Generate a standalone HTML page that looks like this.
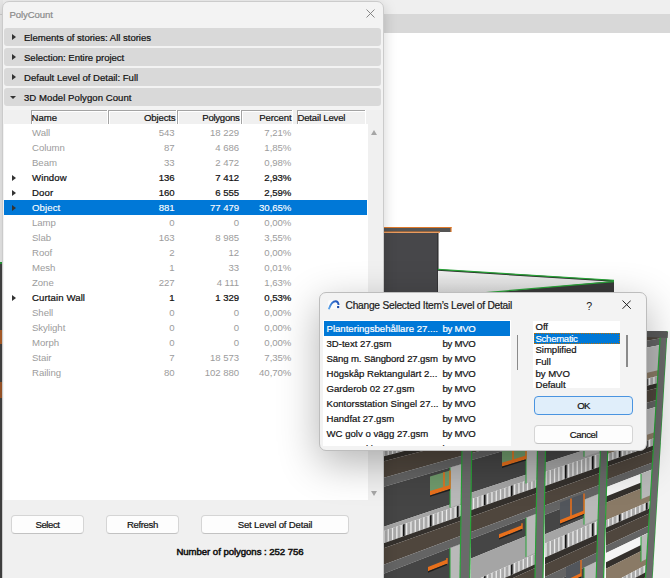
<!DOCTYPE html><html><head><meta charset="utf-8"><style>html,body{margin:0;padding:0}
body{width:670px;height:578px;overflow:hidden;position:relative;background:#fff;font-family:"Liberation Sans",sans-serif;}
.t{position:absolute;white-space:nowrap;line-height:12px;}
.abs{position:absolute;}
.bgtop{position:absolute;left:0;top:0;width:670px;height:14px;background:#efefef;}
.bgband{position:absolute;left:0;top:14px;width:670px;height:19px;background:#d8d8d8;}
.pcframe{position:absolute;left:2px;top:1px;width:380px;height:620px;background:#f3f3f3;border:1px solid #cbcbcb;border-radius:7px;box-shadow:0 4px 14px rgba(0,0,0,0.18);}
.sec{position:absolute;left:4px;width:377px;height:18px;background:#d9d9d9;border-radius:3px;}
.trir{position:absolute;width:0;height:0;border-left:4px solid #333;border-top:3.5px solid transparent;border-bottom:3.5px solid transparent;}
.trid{position:absolute;width:0;height:0;border-top:3.5px solid #333;border-left:3px solid transparent;border-right:3px solid transparent;}
.thead{position:absolute;left:4px;top:110px;width:364px;height:14px;background:#f0f0f0;}
.tbody{position:absolute;left:4px;top:124px;width:364px;height:376px;background:#fff;}
.hc{position:absolute;top:110px;height:13px;border-top:1px solid #a3a3a3;border-left:1px solid #a3a3a3;box-shadow:inset 1px 1px 0 #fff, 1px 0 0 #fff;box-sizing:border-box;height:14px;}
.selrow{position:absolute;left:4px;width:363px;height:15px;background:#0078d7;}
.scrollbg{position:absolute;left:368px;top:110px;width:15px;height:390px;background:#f0f0f0;}
.sup{position:absolute;left:371px;top:130px;width:0;height:0;border-bottom:5px solid #a6a6a6;border-left:3.5px solid transparent;border-right:3.5px solid transparent;}
.sdn{position:absolute;left:371px;top:491px;width:0;height:0;border-top:5px solid #a6a6a6;border-left:3.5px solid transparent;border-right:3.5px solid transparent;}
.bottom{position:absolute;left:3px;top:500px;width:380px;height:78px;background:#f0f0f0;}
.btn{position:absolute;box-sizing:border-box;background:#fdfdfd;border:1px solid #d5d5d5;border-bottom-color:#c2c2c2;border-radius:4px;}
.cdframe{position:absolute;left:319px;top:292px;width:326px;height:157px;background:#f3f3f3;border:1px solid #bdbdbd;border-radius:7px;box-shadow:0 12px 40px rgba(0,0,0,0.30);}
.list1{position:absolute;left:322.5px;top:320px;width:188px;height:126px;background:#fff;overflow:hidden;}
.sel1{position:absolute;left:1.5px;width:186px;height:15px;background:#0078d7;}
.sb1{position:absolute;left:516.5px;top:335px;width:1.5px;height:35px;background:#8a8a8a;}
.sb2{position:absolute;left:626px;top:335px;width:1.5px;height:32px;background:#8a8a8a;}
.list2{position:absolute;left:533px;top:321px;width:87px;height:66.7px;background:#fff;overflow:hidden;}
.sel2{position:absolute;left:0.5px;top:12.3px;width:86px;height:10.5px;background:#0078d7;outline:1px dotted #c07000;outline-offset:-1px;}
.okb{position:absolute;box-sizing:border-box;left:534px;top:396px;width:99px;height:19px;background:#e0eefa;border:1px solid #4a94e0;border-radius:4px;}
.cnb{position:absolute;box-sizing:border-box;left:534px;top:425px;width:99px;height:19px;background:#fdfdfd;border:1px solid #d5d5d5;border-bottom-color:#c2c2c2;border-radius:4px;}
</style></head><body>
<div class="bgtop"></div><div class="bgband"></div>
<div class="abs" style="left:0;top:0;width:3px;height:14px;background:#e8e8e8"></div><div class="abs" style="left:0;top:14px;width:3px;height:1px;background:#cecece"></div><div class="abs" style="left:0;top:15px;width:3px;height:247px;background:#ededed"></div>
<div class="abs" style="left:0;top:262px;width:2px;height:2px;background:#2a9a3a"></div><div class="abs" style="left:0;top:264px;width:2px;height:314px;background:#444"></div><div class="abs" style="left:0;top:330px;width:2px;height:14px;background:#b0602a"></div><div class="abs" style="left:0;top:382px;width:2px;height:16px;background:#a0582a"></div>
<svg class="abs" style="left:0;top:0" width="670" height="578" viewBox="0 0 670 578"><defs><linearGradient id="gshade" x1="0" y1="0" x2="0" y2="1"><stop offset="0" stop-color="#f0f0f0"/><stop offset="1" stop-color="#dadada"/></linearGradient></defs><rect x="383" y="227" width="68" height="5" fill="#555"/><line x1="383" y1="227.5" x2="451.5" y2="227.5" stroke="#e07a2a" stroke-width="1.2"/><line x1="383" y1="232.2" x2="440" y2="232.2" stroke="#e07a2a" stroke-width="1.2"/><line x1="451" y1="227" x2="451" y2="232" stroke="#e07a2a" stroke-width="1.2"/><rect x="383" y="233" width="55" height="60" fill="#47474a"/><line x1="438" y1="233" x2="438" y2="293" stroke="#222" stroke-width="1"/><polygon points="438,270 614,281 614,293 438,293" fill="url(#gshade)"/><polygon points="486,293 614,281 614,293" fill="#3a3a3a"/><line x1="438" y1="270" x2="614" y2="281" stroke="#2a2a2a" stroke-width="1.6"/><line x1="438" y1="269.4" x2="614" y2="280.4" stroke="#29a338" stroke-width="1.2"/><line x1="486" y1="292.6" x2="614" y2="281.6" stroke="#29a338" stroke-width="1.3"/><defs><pattern id="rail" x="0" y="0" width="27" height="60" patternUnits="userSpaceOnUse"><rect width="27" height="60" fill="#a9a9a9"/><rect x="1.0" width="1.3" height="60" fill="#ececec"/><rect x="5.3" width="1.3" height="60" fill="#ececec"/><rect x="9.6" width="1.3" height="60" fill="#ececec"/><rect x="13.9" width="1.3" height="60" fill="#ececec"/><rect x="18.2" width="1.3" height="60" fill="#ececec"/><rect x="22.5" width="1.3" height="60" fill="#ececec"/><rect x="25" width="1.6" height="60" fill="#141414"/></pattern></defs>
<clipPath id="fac"><polygon points="383,440 646,440 646,331 670,331 670,578 383,578"/></clipPath>
<g clip-path="url(#fac)">
<rect x="383" y="293" width="287" height="285" fill="#f6f6f6"/>
<polygon points="383.0,217.0 463.0,217.3 463.0,225.4 383.0,225.9" fill="#646464" />
<polygon points="383.0,225.9 463.0,225.4 463.0,262.0 383.0,265.9" fill="#454545" />
<polygon points="383.0,265.9 463.0,262.0 463.0,265.9 383.0,270.2" fill="#a5a5a5" />
<polygon points="383.0,270.2 463.0,265.9 463.0,277.1 383.0,282.4" fill="url(#rail)" />
<polygon points="383.0,282.4 463.0,277.1 463.0,281.8 383.0,287.6" fill="#34302c" />
<polygon points="383.0,287.6 463.0,281.8 463.0,296.8 383.0,304.0" fill="#4f463d" />
<polygon points="383.0,304.0 463.0,296.8 463.0,304.9 383.0,312.9" fill="#646464" />
<polygon points="383.0,312.9 463.0,304.9 463.0,341.4 383.0,352.9" fill="#454545" />
<polygon points="383.0,352.9 463.0,341.4 463.0,345.4 383.0,357.2" fill="#a5a5a5" />
<polygon points="383.0,357.2 463.0,345.4 463.0,356.5 383.0,369.4" fill="url(#rail)" />
<polygon points="383.0,369.4 463.0,356.5 463.0,361.2 383.0,374.6" fill="#34302c" />
<polygon points="383.0,374.6 463.0,361.2 463.0,376.2 383.0,391.0" fill="#4f463d" />
<polygon points="383.0,391.0 463.0,376.2 463.0,384.3 383.0,399.9" fill="#646464" />
<polygon points="383.0,399.9 463.0,384.3 463.0,420.8 383.0,439.9" fill="#454545" />
<polygon points="383.0,439.9 463.0,420.8 463.0,424.8 383.0,444.2" fill="#a5a5a5" />
<polygon points="383.0,444.2 463.0,424.8 463.0,435.9 383.0,456.4" fill="url(#rail)" />
<polygon points="383.0,456.4 463.0,435.9 463.0,440.6 383.0,461.6" fill="#34302c" />
<polygon points="383.0,461.6 463.0,440.6 463.0,455.6 383.0,478.0" fill="#4f463d" />
<polygon points="383.0,478.0 463.0,455.6 463.0,463.7 383.0,486.9" fill="#646464" />
<polygon points="383.0,486.9 463.0,463.7 463.0,500.2 383.0,526.9" fill="#454545" />
<polygon points="383.0,526.9 463.0,500.2 463.0,504.2 383.0,531.2" fill="#a5a5a5" />
<polygon points="383.0,531.2 463.0,504.2 463.0,515.3 383.0,543.4" fill="url(#rail)" />
<polygon points="383.0,543.4 463.0,515.3 463.0,520.1 383.0,548.6" fill="#34302c" />
<polygon points="383.0,548.6 463.0,520.1 463.0,535.0 383.0,565.0" fill="#4f463d" />
<polygon points="383.0,565.0 463.0,535.0 463.0,543.1 383.0,573.9" fill="#646464" />
<polygon points="383.0,573.9 463.0,543.1 463.0,579.6 383.0,613.9" fill="#454545" />
<polygon points="383.0,613.9 463.0,579.6 463.0,583.6 383.0,618.2" fill="#a5a5a5" />
<polygon points="383.0,618.2 463.0,583.6 463.0,594.7 383.0,630.4" fill="url(#rail)" />
<polygon points="383.0,630.4 463.0,594.7 463.0,599.5 383.0,635.6" fill="#34302c" />
<polygon points="383.0,635.6 463.0,599.5 463.0,614.4 383.0,652.0" fill="#4f463d" />
<polygon points="383.0,652.0 463.0,614.4 463.0,622.5 383.0,660.9" fill="#646464" />
<polygon points="383.0,660.9 463.0,622.5 463.0,659.0 383.0,700.9" fill="#454545" />
<polygon points="383.0,700.9 463.0,659.0 463.0,663.0 383.0,705.2" fill="#a5a5a5" />
<polygon points="383.0,705.2 463.0,663.0 463.0,674.1 383.0,717.4" fill="url(#rail)" />
<polygon points="383.0,717.4 463.0,674.1 463.0,678.9 383.0,722.6" fill="#34302c" />
<polygon points="383.0,722.6 463.0,678.9 463.0,693.8 383.0,739.0" fill="#4f463d" />
<polygon points="383.0,739.0 463.0,693.8 463.0,701.9 383.0,747.9" fill="#646464" />
<polygon points="383.0,747.9 463.0,701.9 463.0,738.4 383.0,787.9" fill="#454545" />
<polygon points="383.0,787.9 463.0,738.4 463.0,742.4 383.0,792.2" fill="#a5a5a5" />
<polygon points="383.0,792.2 463.0,742.4 463.0,753.5 383.0,804.4" fill="url(#rail)" />
<polygon points="383.0,804.4 463.0,753.5 463.0,758.3 383.0,809.6" fill="#34302c" />
<polygon points="383.0,809.6 463.0,758.3 463.0,773.2 383.0,826.0" fill="#4f463d" />
<polygon points="471.0,217.4 539.0,217.7 539.0,224.0 471.0,224.3" fill="#646464" />
<polygon points="471.0,224.3 539.0,224.0 539.0,253.8 471.0,256.7" fill="#454545" />
<polygon points="471.0,256.7 539.0,253.8 539.0,259.8 471.0,263.3" fill="#a5a5a5" />
<polygon points="471.0,263.3 539.0,259.8 539.0,269.9 471.0,274.2" fill="url(#rail)" />
<polygon points="471.0,274.2 539.0,269.9 539.0,275.9 471.0,280.8" fill="#34302c" />
<polygon points="471.0,280.8 539.0,275.9 539.0,289.9 471.0,296.0" fill="#4f463d" />
<polygon points="471.0,296.0 539.0,289.9 539.0,296.2 471.0,302.9" fill="#646464" />
<polygon points="471.0,302.9 539.0,296.2 539.0,326.0 471.0,335.4" fill="#454545" />
<polygon points="471.0,335.4 539.0,326.0 539.0,332.0 471.0,342.0" fill="#a5a5a5" />
<polygon points="471.0,342.0 539.0,332.0 539.0,342.1 471.0,352.9" fill="url(#rail)" />
<polygon points="471.0,352.9 539.0,342.1 539.0,348.1 471.0,359.4" fill="#34302c" />
<polygon points="471.0,359.4 539.0,348.1 539.0,362.1 471.0,374.7" fill="#4f463d" />
<polygon points="471.0,374.7 539.0,362.1 539.0,368.4 471.0,381.6" fill="#646464" />
<polygon points="471.0,381.6 539.0,368.4 539.0,398.2 471.0,414.0" fill="#454545" />
<polygon points="471.0,414.0 539.0,398.2 539.0,404.2 471.0,420.6" fill="#a5a5a5" />
<polygon points="471.0,420.6 539.0,404.2 539.0,414.3 471.0,431.6" fill="url(#rail)" />
<polygon points="471.0,431.6 539.0,414.3 539.0,420.3 471.0,438.1" fill="#34302c" />
<polygon points="471.0,438.1 539.0,420.3 539.0,434.3 471.0,453.3" fill="#4f463d" />
<polygon points="471.0,453.3 539.0,434.3 539.0,440.6 471.0,460.2" fill="#646464" />
<polygon points="471.0,460.2 539.0,440.6 539.0,470.4 471.0,492.7" fill="#454545" />
<polygon points="471.0,492.7 539.0,470.4 539.0,476.4 471.0,499.3" fill="#a5a5a5" />
<polygon points="471.0,499.3 539.0,476.4 539.0,486.5 471.0,510.2" fill="url(#rail)" />
<polygon points="471.0,510.2 539.0,486.5 539.0,492.5 471.0,516.7" fill="#34302c" />
<polygon points="471.0,516.7 539.0,492.5 539.0,506.5 471.0,532.0" fill="#4f463d" />
<polygon points="471.0,532.0 539.0,506.5 539.0,512.8 471.0,538.9" fill="#646464" />
<polygon points="471.0,538.9 539.0,512.8 539.0,530.8 471.0,558.5" fill="#454545" />
<polygon points="471.0,558.5 539.0,530.8 539.0,552.5 471.0,582.1" fill="#a5a5a5" />
<polygon points="471.0,582.1 539.0,552.5 539.0,562.5 471.0,593.1" fill="url(#rail)" />
<polygon points="471.0,593.1 539.0,562.5 539.0,566.2 471.0,597.0" fill="#34302c" />
<polygon points="471.0,597.0 539.0,566.2 539.0,578.7 471.0,610.6" fill="#4f463d" />
<polygon points="471.0,610.6 539.0,578.7 539.0,585.0 471.0,617.5" fill="#646464" />
<polygon points="471.0,617.5 539.0,585.0 539.0,614.8 471.0,650.0" fill="#454545" />
<polygon points="471.0,650.0 539.0,614.8 539.0,620.8 471.0,656.6" fill="#a5a5a5" />
<polygon points="471.0,656.6 539.0,620.8 539.0,630.9 471.0,667.5" fill="url(#rail)" />
<polygon points="471.0,667.5 539.0,630.9 539.0,636.9 471.0,674.0" fill="#34302c" />
<polygon points="471.0,674.0 539.0,636.9 539.0,650.9 471.0,689.3" fill="#4f463d" />
<polygon points="471.0,689.3 539.0,650.9 539.0,657.2 471.0,696.2" fill="#646464" />
<polygon points="471.0,696.2 539.0,657.2 539.0,687.0 471.0,728.6" fill="#454545" />
<polygon points="471.0,728.6 539.0,687.0 539.0,693.0 471.0,735.2" fill="#a5a5a5" />
<polygon points="471.0,735.2 539.0,693.0 539.0,703.1 471.0,746.2" fill="url(#rail)" />
<polygon points="471.0,746.2 539.0,703.1 539.0,709.1 471.0,752.7" fill="#34302c" />
<polygon points="471.0,752.7 539.0,709.1 539.0,723.1 471.0,767.9" fill="#4f463d" />
<polygon points="545.0,218.9 602.0,219.1 602.0,227.8 545.0,228.3" fill="#646464" />
<polygon points="545.0,228.3 602.0,227.8 602.0,245.8 545.0,247.8" fill="#454545" />
<polygon points="545.0,247.8 602.0,245.8 602.0,254.4 545.0,257.1" fill="#a5a5a5" />
<polygon points="545.0,257.1 602.0,254.4 602.0,267.3 545.0,271.1" fill="url(#rail)" />
<polygon points="545.0,271.1 602.0,267.3 602.0,273.6 545.0,277.9" fill="#34302c" />
<polygon points="545.0,277.9 602.0,273.6 602.0,285.3 545.0,290.6" fill="#4f463d" />
<polygon points="545.0,290.6 602.0,285.3 602.0,294.0 545.0,300.0" fill="#646464" />
<polygon points="545.0,300.0 602.0,294.0 602.0,312.0 545.0,319.4" fill="#454545" />
<polygon points="545.0,319.4 602.0,312.0 602.0,320.6 545.0,328.8" fill="#a5a5a5" />
<polygon points="545.0,328.8 602.0,320.6 602.0,333.5 545.0,342.7" fill="url(#rail)" />
<polygon points="545.0,342.7 602.0,333.5 602.0,339.8 545.0,349.5" fill="#34302c" />
<polygon points="545.0,349.5 602.0,339.8 602.0,351.5 545.0,362.2" fill="#4f463d" />
<polygon points="545.0,362.2 602.0,351.5 602.0,360.2 545.0,371.6" fill="#646464" />
<polygon points="545.0,371.6 602.0,360.2 602.0,378.2 545.0,391.1" fill="#454545" />
<polygon points="545.0,391.1 602.0,378.2 602.0,386.8 545.0,400.4" fill="#a5a5a5" />
<polygon points="545.0,400.4 602.0,386.8 602.0,399.8 545.0,414.3" fill="url(#rail)" />
<polygon points="545.0,414.3 602.0,399.8 602.0,406.0 545.0,421.2" fill="#34302c" />
<polygon points="545.0,421.2 602.0,406.0 602.0,417.8 545.0,433.8" fill="#4f463d" />
<polygon points="545.0,433.8 602.0,417.8 602.0,426.4 545.0,443.2" fill="#646464" />
<polygon points="545.0,443.2 602.0,426.4 602.0,444.5 545.0,462.7" fill="#454545" />
<polygon points="545.0,462.7 602.0,444.5 602.0,453.1 545.0,472.0" fill="#a5a5a5" />
<polygon points="545.0,472.0 602.0,453.1 602.0,466.0 545.0,486.0" fill="url(#rail)" />
<polygon points="545.0,486.0 602.0,466.0 602.0,472.3 545.0,492.8" fill="#34302c" />
<polygon points="545.0,492.8 602.0,472.3 602.0,484.0 545.0,505.5" fill="#4f463d" />
<polygon points="545.0,505.5 602.0,484.0 602.0,492.7 545.0,514.8" fill="#646464" />
<polygon points="545.0,514.8 602.0,492.7 602.0,510.7 545.0,534.3" fill="#454545" />
<polygon points="545.0,534.3 602.0,510.7 602.0,519.3 545.0,543.6" fill="#a5a5a5" />
<polygon points="545.0,543.6 602.0,519.3 602.0,532.2 545.0,557.6" fill="url(#rail)" />
<polygon points="545.0,557.6 602.0,532.2 602.0,538.5 545.0,564.4" fill="#34302c" />
<polygon points="545.0,564.4 602.0,538.5 602.0,550.2 545.0,577.1" fill="#4f463d" />
<polygon points="545.0,577.1 602.0,550.2 602.0,558.9 545.0,586.5" fill="#646464" />
<polygon points="545.0,586.5 602.0,558.9 602.0,576.9 545.0,606.0" fill="#454545" />
<polygon points="545.0,606.0 602.0,576.9 602.0,585.5 545.0,615.3" fill="#a5a5a5" />
<polygon points="545.0,615.3 602.0,585.5 602.0,598.4 545.0,629.2" fill="url(#rail)" />
<polygon points="545.0,629.2 602.0,598.4 602.0,604.7 545.0,636.0" fill="#34302c" />
<polygon points="545.0,636.0 602.0,604.7 602.0,616.4 545.0,648.7" fill="#4f463d" />
<polygon points="545.0,648.7 602.0,616.4 602.0,625.1 545.0,658.1" fill="#646464" />
<polygon points="545.0,658.1 602.0,625.1 602.0,643.1 545.0,677.6" fill="#454545" />
<polygon points="545.0,677.6 602.0,643.1 602.0,651.7 545.0,686.9" fill="#a5a5a5" />
<polygon points="545.0,686.9 602.0,651.7 602.0,664.6 545.0,700.9" fill="url(#rail)" />
<polygon points="545.0,700.9 602.0,664.6 602.0,670.9 545.0,707.7" fill="#34302c" />
<polygon points="545.0,707.7 602.0,670.9 602.0,682.7 545.0,720.4" fill="#4f463d" />
<polygon points="606.0,216.5 662.0,216.8 662.0,223.7 606.0,223.9" fill="#646464" />
<polygon points="606.0,223.9 662.0,223.7 662.0,232.1 606.0,233.1" fill="#f4f4f4" />
<polygon points="606.0,233.1 662.0,232.1 662.0,238.0 606.0,239.4" fill="#34302c" />
<polygon points="606.0,239.4 662.0,238.0 662.0,254.0 606.0,256.9" fill="#8a7a66" />
<polygon points="606.0,256.9 662.0,254.0 662.0,260.8 606.0,264.3" fill="url(#rail)" />
<polygon points="606.0,264.3 662.0,260.8 662.0,265.7 606.0,269.6" fill="#34302c" />
<polygon points="606.0,269.6 662.0,265.7 662.0,277.4 606.0,282.4" fill="#4f463d" />
<polygon points="606.0,282.3 662.0,277.4 662.0,284.2 606.0,289.7" fill="#646464" />
<polygon points="606.0,289.7 662.0,284.2 662.0,292.6 606.0,298.9" fill="#f4f4f4" />
<polygon points="606.0,298.9 662.0,292.6 662.0,298.5 606.0,305.3" fill="#34302c" />
<polygon points="606.0,305.3 662.0,298.5 662.0,314.5 606.0,322.7" fill="#8a7a66" />
<polygon points="606.0,322.7 662.0,314.5 662.0,321.4 606.0,330.2" fill="url(#rail)" />
<polygon points="606.0,330.2 662.0,321.4 662.0,326.2 606.0,335.4" fill="#34302c" />
<polygon points="606.0,335.4 662.0,326.2 662.0,337.9 606.0,348.2" fill="#4f463d" />
<polygon points="606.0,348.1 662.0,337.9 662.0,344.7 606.0,355.6" fill="#646464" />
<polygon points="606.0,355.6 662.0,344.7 662.0,353.1 606.0,364.7" fill="#f4f4f4" />
<polygon points="606.0,364.7 662.0,353.1 662.0,359.0 606.0,371.1" fill="#34302c" />
<polygon points="606.0,371.1 662.0,359.0 662.0,375.1 606.0,388.6" fill="#8a7a66" />
<polygon points="606.0,388.6 662.0,375.1 662.0,381.9 606.0,396.0" fill="url(#rail)" />
<polygon points="606.0,396.0 662.0,381.9 662.0,386.7 606.0,401.3" fill="#34302c" />
<polygon points="606.0,401.3 662.0,386.7 662.0,398.5 606.0,414.1" fill="#4f463d" />
<polygon points="606.0,414.0 662.0,398.4 662.0,405.3 606.0,421.4" fill="#646464" />
<polygon points="606.0,421.4 662.0,405.3 662.0,413.7 606.0,430.6" fill="#f4f4f4" />
<polygon points="606.0,430.6 662.0,413.7 662.0,419.5 606.0,437.0" fill="#34302c" />
<polygon points="606.0,437.0 662.0,419.5 662.0,435.6 606.0,454.4" fill="#8a7a66" />
<polygon points="606.0,454.4 662.0,435.6 662.0,442.4 606.0,461.9" fill="url(#rail)" />
<polygon points="606.0,461.9 662.0,442.4 662.0,447.3 606.0,467.1" fill="#34302c" />
<polygon points="606.0,467.1 662.0,447.3 662.0,459.0 606.0,479.9" fill="#4f463d" />
<polygon points="606.0,479.8 662.0,458.9 662.0,465.8 606.0,487.3" fill="#646464" />
<polygon points="606.0,487.3 662.0,465.8 662.0,474.2 606.0,496.4" fill="#f4f4f4" />
<polygon points="606.0,496.4 662.0,474.2 662.0,480.1 606.0,502.8" fill="#34302c" />
<polygon points="606.0,502.8 662.0,480.1 662.0,496.1 606.0,520.3" fill="#8a7a66" />
<polygon points="606.0,520.3 662.0,496.1 662.0,503.0 606.0,527.7" fill="url(#rail)" />
<polygon points="606.0,527.7 662.0,503.0 662.0,507.8 606.0,533.0" fill="#34302c" />
<polygon points="606.0,533.0 662.0,507.8 662.0,519.5 606.0,545.7" fill="#4f463d" />
<polygon points="606.0,545.7 662.0,519.5 662.0,526.3 606.0,553.1" fill="#646464" />
<polygon points="606.0,553.1 662.0,526.3 662.0,534.7 606.0,562.3" fill="#f4f4f4" />
<polygon points="606.0,562.3 662.0,534.7 662.0,540.6 606.0,568.7" fill="#34302c" />
<polygon points="606.0,568.7 662.0,540.6 662.0,556.6 606.0,586.1" fill="#8a7a66" />
<polygon points="606.0,586.1 662.0,556.6 662.0,563.5 606.0,593.5" fill="url(#rail)" />
<polygon points="606.0,593.5 662.0,563.5 662.0,568.3 606.0,598.8" fill="#34302c" />
<polygon points="606.0,598.8 662.0,568.3 662.0,580.1 606.0,611.6" fill="#4f463d" />
<polygon points="606.0,611.5 662.0,580.0 662.0,586.8 606.0,619.0" fill="#646464" />
<polygon points="606.0,619.0 662.0,586.8 662.0,595.3 606.0,628.1" fill="#f4f4f4" />
<polygon points="606.0,628.1 662.0,595.3 662.0,601.1 606.0,634.5" fill="#34302c" />
<polygon points="606.0,634.5 662.0,601.1 662.0,617.2 606.0,651.9" fill="#8a7a66" />
<polygon points="606.0,651.9 662.0,617.2 662.0,624.0 606.0,659.4" fill="url(#rail)" />
<polygon points="606.0,659.4 662.0,624.0 662.0,628.9 606.0,664.7" fill="#34302c" />
<polygon points="606.0,664.7 662.0,628.9 662.0,640.6 606.0,677.4" fill="#4f463d" />
<polygon points="450.0,225.5 462.0,225.5 462.0,265.0 450.0,265.7" fill="#b9b9b9" />
<line x1="450.0" y1="225.5" x2="450.0" y2="265.7" stroke="#29a338" stroke-width="1.0"/>
<polygon points="526.0,224.0 537.0,224.0 537.0,262.6 526.0,263.2" fill="#b9b9b9" />
<line x1="526.0" y1="224.0" x2="526.0" y2="263.2" stroke="#29a338" stroke-width="1.0"/>
<polygon points="584.0,227.9 599.0,227.8 599.0,252.3 584.0,253.0" fill="#b9b9b9" />
<line x1="584.0" y1="227.9" x2="584.0" y2="253.0" stroke="#29a338" stroke-width="1.0"/>
<polygon points="641.0,223.8 660.0,223.7 660.0,248.4 641.0,249.2" fill="#b9b9b9" />
<line x1="641.0" y1="223.8" x2="641.0" y2="249.2" stroke="#29a338" stroke-width="1.0"/>
<polygon points="450.0,306.2 462.0,305.0 462.0,344.6 450.0,346.3" fill="#b9b9b9" />
<line x1="450.0" y1="306.2" x2="450.0" y2="346.3" stroke="#29a338" stroke-width="1.0"/>
<polygon points="526.0,297.5 537.0,296.4 537.0,334.9 526.0,336.6" fill="#b9b9b9" />
<line x1="526.0" y1="297.5" x2="526.0" y2="336.6" stroke="#29a338" stroke-width="1.0"/>
<polygon points="584.0,295.9 599.0,294.3 599.0,318.8 584.0,320.9" fill="#b9b9b9" />
<line x1="584.0" y1="295.9" x2="584.0" y2="320.9" stroke="#29a338" stroke-width="1.0"/>
<polygon points="641.0,286.3 660.0,284.4 660.0,309.1 641.0,311.7" fill="#b9b9b9" />
<line x1="641.0" y1="286.3" x2="641.0" y2="311.7" stroke="#29a338" stroke-width="1.0"/>
<polygon points="450.0,386.8 462.0,384.5 462.0,424.1 450.0,427.0" fill="#b9b9b9" />
<line x1="450.0" y1="386.8" x2="450.0" y2="427.0" stroke="#29a338" stroke-width="1.0"/>
<polygon points="526.0,370.9 537.0,368.8 537.0,407.3 526.0,410.0" fill="#b9b9b9" />
<line x1="526.0" y1="370.9" x2="526.0" y2="410.0" stroke="#29a338" stroke-width="1.0"/>
<polygon points="584.0,363.8 599.0,360.8 599.0,385.4 584.0,388.9" fill="#b9b9b9" />
<line x1="584.0" y1="363.8" x2="584.0" y2="388.9" stroke="#29a338" stroke-width="1.0"/>
<polygon points="641.0,348.8 660.0,345.1 660.0,369.8 641.0,374.2" fill="#b9b9b9" />
<line x1="641.0" y1="348.8" x2="641.0" y2="374.2" stroke="#29a338" stroke-width="1.0"/>
<polygon points="450.0,467.4 462.0,464.0 462.0,503.6 450.0,507.6" fill="#b9b9b9" />
<line x1="450.0" y1="467.4" x2="450.0" y2="507.6" stroke="#29a338" stroke-width="1.0"/>
<polygon points="526.0,444.3 537.0,441.2 537.0,479.7 526.0,483.5" fill="#b9b9b9" />
<line x1="526.0" y1="444.3" x2="526.0" y2="483.5" stroke="#29a338" stroke-width="1.0"/>
<polygon points="584.0,431.7 599.0,427.3 599.0,451.9 584.0,456.8" fill="#b9b9b9" />
<line x1="584.0" y1="431.7" x2="584.0" y2="456.8" stroke="#29a338" stroke-width="1.0"/>
<polygon points="641.0,411.3 660.0,405.8 660.0,430.5 641.0,436.8" fill="#b9b9b9" />
<line x1="641.0" y1="411.3" x2="641.0" y2="436.8" stroke="#29a338" stroke-width="1.0"/>
<polygon points="450.0,548.1 462.0,543.5 462.0,583.1 450.0,588.3" fill="#b9b9b9" />
<line x1="450.0" y1="548.1" x2="450.0" y2="588.3" stroke="#29a338" stroke-width="1.0"/>
<polygon points="526.0,517.8 537.0,513.6 537.0,552.1 526.0,556.9" fill="#b9b9b9" />
<line x1="526.0" y1="517.8" x2="526.0" y2="556.9" stroke="#29a338" stroke-width="1.0"/>
<polygon points="584.0,499.7 599.0,493.8 599.0,518.4 584.0,524.7" fill="#b9b9b9" />
<line x1="584.0" y1="499.7" x2="584.0" y2="524.7" stroke="#29a338" stroke-width="1.0"/>
<polygon points="641.0,473.8 660.0,466.6 660.0,491.3 641.0,499.3" fill="#b9b9b9" />
<line x1="641.0" y1="473.8" x2="641.0" y2="499.3" stroke="#29a338" stroke-width="1.0"/>
<polygon points="450.0,628.7 462.0,623.0 462.0,662.6 450.0,668.9" fill="#b9b9b9" />
<line x1="450.0" y1="628.7" x2="450.0" y2="668.9" stroke="#29a338" stroke-width="1.0"/>
<polygon points="526.0,591.2 537.0,586.0 537.0,624.5 526.0,630.3" fill="#b9b9b9" />
<line x1="526.0" y1="591.2" x2="526.0" y2="630.3" stroke="#29a338" stroke-width="1.0"/>
<polygon points="584.0,567.6 599.0,560.3 599.0,584.9 584.0,592.7" fill="#b9b9b9" />
<line x1="584.0" y1="567.6" x2="584.0" y2="592.7" stroke="#29a338" stroke-width="1.0"/>
<polygon points="641.0,536.4 660.0,527.3 660.0,552.0 641.0,561.8" fill="#b9b9b9" />
<line x1="641.0" y1="536.4" x2="641.0" y2="561.8" stroke="#29a338" stroke-width="1.0"/>
<polygon points="430.0,476.4 450.0,470.5 450.0,485.8 430.0,492.1" fill="#6f9a6c" />
<polygon points="430.0,491.1 450.0,484.9 450.0,489.1 430.0,495.4" fill="#e8701c" />
<polygon points="430.0,495.4 450.0,489.1 450.0,490.5 430.0,496.8" fill="#1e1e1e" />
<line x1="444.0" y1="472.3" x2="444.0" y2="487.7" stroke="#e8701c" stroke-width="1.6"/>
<line x1="450.0" y1="470.5" x2="450.0" y2="489.1" stroke="#e8701c" stroke-width="1.4"/>
<polygon points="428.0,565.5 447.0,558.0 447.0,560.4 428.0,568.0" fill="#474747" />
<polygon points="428.0,567.0 447.0,559.5 447.0,563.7 428.0,571.3" fill="#e8701c" />
<polygon points="428.0,571.3 447.0,563.7 447.0,565.1 428.0,572.7" fill="#1e1e1e" />
<line x1="447.0" y1="558.0" x2="447.0" y2="563.7" stroke="#e8701c" stroke-width="1.4"/>
<polygon points="502.0,444.6 526.0,437.9 526.0,456.3 502.0,463.6" fill="#6f9a6c" />
<polygon points="502.0,462.7 526.0,455.4 526.0,459.2 502.0,466.6" fill="#e8701c" />
<polygon points="502.0,466.6 526.0,459.2 526.0,460.5 502.0,467.9" fill="#1e1e1e" />
<line x1="513.0" y1="441.6" x2="513.0" y2="460.2" stroke="#e8701c" stroke-width="1.6"/>
<line x1="526.0" y1="437.9" x2="526.0" y2="459.2" stroke="#e8701c" stroke-width="1.4"/>
<polygon points="499.0,532.1 522.0,523.2 522.0,526.1 499.0,535.2" fill="#474747" />
<polygon points="499.0,534.3 522.0,525.3 522.0,529.1 499.0,538.2" fill="#e8701c" />
<polygon points="499.0,538.2 522.0,529.1 522.0,530.4 499.0,539.5" fill="#1e1e1e" />
<line x1="522.0" y1="523.2" x2="522.0" y2="529.1" stroke="#e8701c" stroke-width="1.4"/>
<polygon points="563.0,427.6 588.0,420.5 588.0,428.7 563.0,435.9" fill="#505560" />
<polygon points="563.0,435.1 588.0,427.9 588.0,431.4 563.0,438.8" fill="#e8701c" />
<polygon points="563.0,438.8 588.0,431.4 588.0,432.5 563.0,440.0" fill="#1e1e1e" />
<line x1="588.0" y1="420.5" x2="588.0" y2="431.4" stroke="#e8701c" stroke-width="1.4"/>
<polygon points="560.0,502.6 584.0,493.5 584.0,511.1 560.0,520.9" fill="#52565c" />
<polygon points="560.0,520.1 584.0,510.4 584.0,513.9 560.0,523.7" fill="#e8701c" />
<polygon points="560.0,523.7 584.0,513.9 584.0,515.1 560.0,524.9" fill="#1e1e1e" />
<line x1="571.0" y1="498.4" x2="571.0" y2="516.4" stroke="#e8701c" stroke-width="1.6"/>
<line x1="584.0" y1="493.5" x2="584.0" y2="513.9" stroke="#e8701c" stroke-width="1.4"/>
<polygon points="566.0,567.2 581.0,560.1 581.0,573.8 566.0,581.1" fill="#52565c" />
<polygon points="566.0,580.3 581.0,573.0 581.0,576.5 566.0,583.9" fill="#e8701c" />
<polygon points="566.0,583.9 581.0,576.5 581.0,577.7 566.0,585.1" fill="#1e1e1e" />
<line x1="581.0" y1="560.1" x2="581.0" y2="576.5" stroke="#e8701c" stroke-width="1.4"/>
<polygon points="464.5,293.0 460.0,578.0 469.8,578.0 474.0,293.0" fill="#6a6a6a" />
<line x1="464.5" y1="293.0" x2="460.0" y2="578.0" stroke="#29a338" stroke-width="1.2"/>
<line x1="474.0" y1="293.0" x2="469.8" y2="578.0" stroke="#29a338" stroke-width="1.2"/>
<polygon points="540.5,293.0 535.0,578.0 543.0,578.0 548.5,293.0" fill="#6a6a6a" />
<line x1="540.5" y1="293.0" x2="535.0" y2="578.0" stroke="#29a338" stroke-width="1.2"/>
<line x1="548.5" y1="293.0" x2="543.0" y2="578.0" stroke="#29a338" stroke-width="1.2"/>
<polygon points="605.4,293.0 596.2,578.0 603.6,578.0 612.8,293.0" fill="#6a6a6a" />
<line x1="605.4" y1="293.0" x2="596.2" y2="578.0" stroke="#29a338" stroke-width="1.2"/>
<line x1="612.8" y1="293.0" x2="603.6" y2="578.0" stroke="#29a338" stroke-width="1.2"/>
<polygon points="660.5,331.0 645.5,578.0 652.7,578.0 667.6,331.0" fill="#6a6a6a" />
<line x1="660.5" y1="331.0" x2="645.5" y2="578.0" stroke="#29a338" stroke-width="1.2"/>
<line x1="667.6" y1="331.0" x2="652.7" y2="578.0" stroke="#29a338" stroke-width="1.2"/>
<polygon points="667.6,331.0 670.0,331.0 670.0,578.0 652.7,578.0" fill="#f3f3f3" />
<polygon points="646.0,329.0 668.0,332.0 667.6,338.0 646.0,337.0" fill="#5a5a5a" />
</g></svg>
<div class="pcframe"></div>
<div class="t " style="top:8.57px;font-size:9.6px;letter-spacing:-0.1px;left:9.5px;color:#8a8a8a;-webkit-text-stroke:0.2px currentColor;">PolyCount</div>
<svg class="abs" style="left:366px;top:9px" width="9" height="9" viewBox="0 0 9 9"><path d="M0.5 0.5L8.5 8.5M8.5 0.5L0.5 8.5" stroke="#7a7a7a" stroke-width="0.9" fill="none"/></svg>
<div class="sec" style="top:28.3px"></div>
<div class="trir" style="left:11.5px;top:33.8px"></div>
<div class="t " style="top:31.97px;font-size:9.6px;letter-spacing:-0.029px;left:24px;color:#111;-webkit-text-stroke:0.2px currentColor;">Elements of stories: All stories</div>
<div class="sec" style="top:48.3px"></div>
<div class="trir" style="left:11.5px;top:53.8px"></div>
<div class="t " style="top:51.97px;font-size:9.6px;letter-spacing:-0.046px;left:24px;color:#111;-webkit-text-stroke:0.2px currentColor;">Selection: Entire project</div>
<div class="sec" style="top:68.3px"></div>
<div class="trir" style="left:11.5px;top:73.8px"></div>
<div class="t " style="top:71.97px;font-size:9.6px;letter-spacing:-0.018px;left:24px;color:#111;-webkit-text-stroke:0.2px currentColor;">Default Level of Detail: Full</div>
<div class="sec" style="top:88.3px"></div>
<div class="trid" style="left:10px;top:95.8px"></div>
<div class="t " style="top:91.97px;font-size:9.6px;letter-spacing:0.038px;left:24px;color:#111;-webkit-text-stroke:0.2px currentColor;">3D Model Polygon Count</div>
<div class="thead"></div>
<div class="tbody"></div>
<div class="hc" style="left:31px;width:76px"></div>
<div class="hc" style="left:108px;width:68px"></div>
<div class="hc" style="left:177px;width:63px"></div>
<div class="hc" style="left:241px;width:51px"></div>
<div class="hc" style="left:297px;width:68px"></div>
<div class="t " style="top:112.07px;font-size:9.6px;letter-spacing:0px;left:31.5px;color:#111;-webkit-text-stroke:0.2px currentColor;">Name</div>
<div class="t " style="top:112.07px;font-size:9.6px;letter-spacing:-0.133px;right:494.5px;color:#111;-webkit-text-stroke:0.2px currentColor;">Objects</div>
<div class="t " style="top:112.07px;font-size:9.6px;letter-spacing:-0.286px;right:430.5px;color:#111;-webkit-text-stroke:0.2px currentColor;">Polygons</div>
<div class="t " style="top:112.07px;font-size:9.6px;letter-spacing:-0.1px;right:378.4px;color:#111;-webkit-text-stroke:0.2px currentColor;">Percent</div>
<div class="t " style="top:112.07px;font-size:9.6px;letter-spacing:-0.2px;left:297.5px;color:#111;-webkit-text-stroke:0.2px currentColor;">Detail Level</div>
<div class="t " style="top:127.07px;font-size:9.6px;letter-spacing:-0.04px;left:32px;color:#9c9c9c;font-weight:none;">Wall</div>
<div class="t " style="top:127.07px;font-size:9.6px;letter-spacing:-0.05px;right:495.4px;color:#9c9c9c;font-weight:none;">543</div>
<div class="t " style="top:127.07px;font-size:9.6px;letter-spacing:-0.05px;right:431.0px;color:#9c9c9c;font-weight:none;">18 229</div>
<div class="t " style="top:127.07px;font-size:9.6px;letter-spacing:-0.05px;right:378.7px;color:#9c9c9c;font-weight:none;">7,21%</div>
<div class="t " style="top:142.07px;font-size:9.6px;letter-spacing:-0.04px;left:32px;color:#9c9c9c;font-weight:none;">Column</div>
<div class="t " style="top:142.07px;font-size:9.6px;letter-spacing:-0.05px;right:495.4px;color:#9c9c9c;font-weight:none;">87</div>
<div class="t " style="top:142.07px;font-size:9.6px;letter-spacing:-0.05px;right:431.0px;color:#9c9c9c;font-weight:none;">4 686</div>
<div class="t " style="top:142.07px;font-size:9.6px;letter-spacing:-0.05px;right:378.7px;color:#9c9c9c;font-weight:none;">1,85%</div>
<div class="t " style="top:157.07px;font-size:9.6px;letter-spacing:-0.04px;left:32px;color:#9c9c9c;font-weight:none;">Beam</div>
<div class="t " style="top:157.07px;font-size:9.6px;letter-spacing:-0.05px;right:495.4px;color:#9c9c9c;font-weight:none;">33</div>
<div class="t " style="top:157.07px;font-size:9.6px;letter-spacing:-0.05px;right:431.0px;color:#9c9c9c;font-weight:none;">2 472</div>
<div class="t " style="top:157.07px;font-size:9.6px;letter-spacing:-0.05px;right:378.7px;color:#9c9c9c;font-weight:none;">0,98%</div>
<div class="trir" style="left:11.5px;top:174.5px"></div>
<div class="t " style="top:172.07px;font-size:9.6px;letter-spacing:0.1px;left:32px;color:#111;-webkit-text-stroke:0.22px currentColor;">Window</div>
<div class="t " style="top:172.07px;font-size:9.6px;letter-spacing:-0.05px;right:495.4px;color:#111;-webkit-text-stroke:0.22px currentColor;">136</div>
<div class="t " style="top:172.07px;font-size:9.6px;letter-spacing:-0.05px;right:431.0px;color:#111;-webkit-text-stroke:0.22px currentColor;">7 412</div>
<div class="t " style="top:172.07px;font-size:9.6px;letter-spacing:-0.05px;right:378.7px;color:#111;-webkit-text-stroke:0.22px currentColor;">2,93%</div>
<div class="trir" style="left:11.5px;top:189.5px"></div>
<div class="t " style="top:187.07px;font-size:9.6px;letter-spacing:0.1px;left:32px;color:#111;-webkit-text-stroke:0.22px currentColor;">Door</div>
<div class="t " style="top:187.07px;font-size:9.6px;letter-spacing:-0.05px;right:495.4px;color:#111;-webkit-text-stroke:0.22px currentColor;">160</div>
<div class="t " style="top:187.07px;font-size:9.6px;letter-spacing:-0.05px;right:431.0px;color:#111;-webkit-text-stroke:0.22px currentColor;">6 555</div>
<div class="t " style="top:187.07px;font-size:9.6px;letter-spacing:-0.05px;right:378.7px;color:#111;-webkit-text-stroke:0.22px currentColor;">2,59%</div>
<div class="selrow" style="top:200px"></div>
<div class="trir" style="left:11.5px;top:204.5px"></div>
<div class="t " style="top:202.07px;font-size:9.6px;letter-spacing:0.1px;left:32px;color:#fff;-webkit-text-stroke:0.12px currentColor;">Object</div>
<div class="t " style="top:202.07px;font-size:9.6px;letter-spacing:-0.05px;right:495.4px;color:#fff;-webkit-text-stroke:0.12px currentColor;">881</div>
<div class="t " style="top:202.07px;font-size:9.6px;letter-spacing:-0.05px;right:431.0px;color:#fff;-webkit-text-stroke:0.12px currentColor;">77 479</div>
<div class="t " style="top:202.07px;font-size:9.6px;letter-spacing:-0.05px;right:378.7px;color:#fff;-webkit-text-stroke:0.12px currentColor;">30,65%</div>
<div class="t " style="top:217.07px;font-size:9.6px;letter-spacing:-0.04px;left:32px;color:#9c9c9c;font-weight:none;">Lamp</div>
<div class="t " style="top:217.07px;font-size:9.6px;letter-spacing:-0.05px;right:495.4px;color:#9c9c9c;font-weight:none;">0</div>
<div class="t " style="top:217.07px;font-size:9.6px;letter-spacing:-0.05px;right:431.0px;color:#9c9c9c;font-weight:none;">0</div>
<div class="t " style="top:217.07px;font-size:9.6px;letter-spacing:-0.05px;right:378.7px;color:#9c9c9c;font-weight:none;">0,00%</div>
<div class="t " style="top:232.07px;font-size:9.6px;letter-spacing:-0.04px;left:32px;color:#9c9c9c;font-weight:none;">Slab</div>
<div class="t " style="top:232.07px;font-size:9.6px;letter-spacing:-0.05px;right:495.4px;color:#9c9c9c;font-weight:none;">163</div>
<div class="t " style="top:232.07px;font-size:9.6px;letter-spacing:-0.05px;right:431.0px;color:#9c9c9c;font-weight:none;">8 985</div>
<div class="t " style="top:232.07px;font-size:9.6px;letter-spacing:-0.05px;right:378.7px;color:#9c9c9c;font-weight:none;">3,55%</div>
<div class="t " style="top:247.07px;font-size:9.6px;letter-spacing:-0.04px;left:32px;color:#9c9c9c;font-weight:none;">Roof</div>
<div class="t " style="top:247.07px;font-size:9.6px;letter-spacing:-0.05px;right:495.4px;color:#9c9c9c;font-weight:none;">2</div>
<div class="t " style="top:247.07px;font-size:9.6px;letter-spacing:-0.05px;right:431.0px;color:#9c9c9c;font-weight:none;">12</div>
<div class="t " style="top:247.07px;font-size:9.6px;letter-spacing:-0.05px;right:378.7px;color:#9c9c9c;font-weight:none;">0,00%</div>
<div class="t " style="top:262.07px;font-size:9.6px;letter-spacing:-0.04px;left:32px;color:#9c9c9c;font-weight:none;">Mesh</div>
<div class="t " style="top:262.07px;font-size:9.6px;letter-spacing:-0.05px;right:495.4px;color:#9c9c9c;font-weight:none;">1</div>
<div class="t " style="top:262.07px;font-size:9.6px;letter-spacing:-0.05px;right:431.0px;color:#9c9c9c;font-weight:none;">33</div>
<div class="t " style="top:262.07px;font-size:9.6px;letter-spacing:-0.05px;right:378.7px;color:#9c9c9c;font-weight:none;">0,01%</div>
<div class="t " style="top:277.07px;font-size:9.6px;letter-spacing:-0.04px;left:32px;color:#9c9c9c;font-weight:none;">Zone</div>
<div class="t " style="top:277.07px;font-size:9.6px;letter-spacing:-0.05px;right:495.4px;color:#9c9c9c;font-weight:none;">227</div>
<div class="t " style="top:277.07px;font-size:9.6px;letter-spacing:-0.05px;right:431.0px;color:#9c9c9c;font-weight:none;">4 111</div>
<div class="t " style="top:277.07px;font-size:9.6px;letter-spacing:-0.05px;right:378.7px;color:#9c9c9c;font-weight:none;">1,63%</div>
<div class="trir" style="left:11.5px;top:294.5px"></div>
<div class="t " style="top:292.07px;font-size:9.6px;letter-spacing:0.1px;left:32px;color:#111;-webkit-text-stroke:0.22px currentColor;">Curtain Wall</div>
<div class="t " style="top:292.07px;font-size:9.6px;letter-spacing:-0.05px;right:495.4px;color:#111;-webkit-text-stroke:0.22px currentColor;">1</div>
<div class="t " style="top:292.07px;font-size:9.6px;letter-spacing:-0.05px;right:431.0px;color:#111;-webkit-text-stroke:0.22px currentColor;">1 329</div>
<div class="t " style="top:292.07px;font-size:9.6px;letter-spacing:-0.05px;right:378.7px;color:#111;-webkit-text-stroke:0.22px currentColor;">0,53%</div>
<div class="t " style="top:307.07px;font-size:9.6px;letter-spacing:-0.04px;left:32px;color:#9c9c9c;font-weight:none;">Shell</div>
<div class="t " style="top:307.07px;font-size:9.6px;letter-spacing:-0.05px;right:495.4px;color:#9c9c9c;font-weight:none;">0</div>
<div class="t " style="top:307.07px;font-size:9.6px;letter-spacing:-0.05px;right:431.0px;color:#9c9c9c;font-weight:none;">0</div>
<div class="t " style="top:307.07px;font-size:9.6px;letter-spacing:-0.05px;right:378.7px;color:#9c9c9c;font-weight:none;">0,00%</div>
<div class="t " style="top:322.07px;font-size:9.6px;letter-spacing:-0.04px;left:32px;color:#9c9c9c;font-weight:none;">Skylight</div>
<div class="t " style="top:322.07px;font-size:9.6px;letter-spacing:-0.05px;right:495.4px;color:#9c9c9c;font-weight:none;">0</div>
<div class="t " style="top:322.07px;font-size:9.6px;letter-spacing:-0.05px;right:431.0px;color:#9c9c9c;font-weight:none;">0</div>
<div class="t " style="top:322.07px;font-size:9.6px;letter-spacing:-0.05px;right:378.7px;color:#9c9c9c;font-weight:none;">0,00%</div>
<div class="t " style="top:337.07px;font-size:9.6px;letter-spacing:-0.04px;left:32px;color:#9c9c9c;font-weight:none;">Morph</div>
<div class="t " style="top:337.07px;font-size:9.6px;letter-spacing:-0.05px;right:495.4px;color:#9c9c9c;font-weight:none;">0</div>
<div class="t " style="top:337.07px;font-size:9.6px;letter-spacing:-0.05px;right:431.0px;color:#9c9c9c;font-weight:none;">0</div>
<div class="t " style="top:337.07px;font-size:9.6px;letter-spacing:-0.05px;right:378.7px;color:#9c9c9c;font-weight:none;">0,00%</div>
<div class="t " style="top:352.07px;font-size:9.6px;letter-spacing:-0.04px;left:32px;color:#9c9c9c;font-weight:none;">Stair</div>
<div class="t " style="top:352.07px;font-size:9.6px;letter-spacing:-0.05px;right:495.4px;color:#9c9c9c;font-weight:none;">7</div>
<div class="t " style="top:352.07px;font-size:9.6px;letter-spacing:-0.05px;right:431.0px;color:#9c9c9c;font-weight:none;">18 573</div>
<div class="t " style="top:352.07px;font-size:9.6px;letter-spacing:-0.05px;right:378.7px;color:#9c9c9c;font-weight:none;">7,35%</div>
<div class="t " style="top:367.07px;font-size:9.6px;letter-spacing:-0.04px;left:32px;color:#9c9c9c;font-weight:none;">Railing</div>
<div class="t " style="top:367.07px;font-size:9.6px;letter-spacing:-0.05px;right:495.4px;color:#9c9c9c;font-weight:none;">80</div>
<div class="t " style="top:367.07px;font-size:9.6px;letter-spacing:-0.05px;right:431.0px;color:#9c9c9c;font-weight:none;">102 880</div>
<div class="t " style="top:367.07px;font-size:9.6px;letter-spacing:-0.05px;right:378.7px;color:#9c9c9c;font-weight:none;">40,70%</div>
<div class="scrollbg"></div>
<div class="sup"></div><div class="sdn"></div>
<div class="bottom"></div>
<div class="btn" style="left:11px;top:515px;width:73px;height:19px"></div>
<div class="t " style="top:519.37px;font-size:9.6px;letter-spacing:-0.46px;right:622.5px;color:#111;-webkit-text-stroke:0.2px currentColor;left:11px;width:73px;text-align:center;right:auto;">Select</div>
<div class="btn" style="left:106px;top:515px;width:73px;height:19px"></div>
<div class="t " style="top:519.37px;font-size:9.6px;letter-spacing:-0.4px;right:527.5px;color:#111;-webkit-text-stroke:0.2px currentColor;left:106px;width:73px;text-align:center;right:auto;">Refresh</div>
<div class="btn" style="left:201px;top:515px;width:148px;height:19px"></div>
<div class="t " style="top:519.37px;font-size:9.6px;letter-spacing:-0.172px;right:395.0px;color:#111;-webkit-text-stroke:0.2px currentColor;left:201px;width:148px;text-align:center;right:auto;">Set Level of Detail</div>
<div class="t " style="top:546.37px;font-size:9.6px;letter-spacing:-0.05px;right:430.3px;color:#111;-webkit-text-stroke:0.5px currentColor;left:100px;width:280px;text-align:center;right:auto;">Number of polygons : 252 756</div>
<div class="cdframe"></div>
<svg class="abs" style="left:327px;top:298.7px" width="14" height="12" viewBox="0 0 14 12"><defs><linearGradient id="ig" x1="0" y1="1" x2="1" y2="0"><stop offset="0" stop-color="#5ea8ec"/><stop offset="1" stop-color="#1d4fb8"/></linearGradient></defs><rect x="1" y="1" width="12" height="9" rx="2" fill="#fbfbfb"/><path d="M1.8 10.2 C3.2 6 5.2 2.2 8.6 2.2 C10.6 2.2 11.4 3.4 11.6 6" stroke="url(#ig)" stroke-width="1.9" fill="none"/><rect x="10.1" y="7" width="2.1" height="2.1" fill="#1d4aa8"/></svg>
<div class="t " style="top:299.67px;font-size:10.2px;letter-spacing:-0.232px;left:345.5px;color:#1a1a1a;-webkit-text-stroke:0.2px currentColor;">Change Selected Item’s Level of Detail</div>
<div class="t " style="top:299.53px;font-size:10.6px;letter-spacing:0px;left:586.3px;color:#1a1a1a;font-weight:none;">?</div>
<svg class="abs" style="left:622px;top:300px" width="9.3" height="9.3" viewBox="0 0 9.3 9.3"><path d="M0.5 0.5L8.8 8.8M8.8 0.5L0.5 8.8" stroke="#222" stroke-width="1.0" fill="none"/></svg>
<div class="list1">
<div class="sel1" style="top:1px"></div>
<div class="t " style="top:2.87px;font-size:9.6px;letter-spacing:0px;left:4.0px;color:#fff;-webkit-text-stroke:0.2px currentColor;">Planteringsbehållare 27....</div>
<div class="t " style="top:2.87px;font-size:9.6px;letter-spacing:-0.28px;left:120.0px;color:#fff;-webkit-text-stroke:0.2px currentColor;">by MVO</div>
<div class="t " style="top:17.87px;font-size:9.6px;letter-spacing:0px;left:4.0px;color:#111;-webkit-text-stroke:0.2px currentColor;">3D-text 27.gsm</div>
<div class="t " style="top:17.87px;font-size:9.6px;letter-spacing:-0.28px;left:120.0px;color:#111;-webkit-text-stroke:0.2px currentColor;">by MVO</div>
<div class="t " style="top:32.87px;font-size:9.6px;letter-spacing:-0.12px;left:4.0px;color:#111;-webkit-text-stroke:0.2px currentColor;">Säng m. Sängbord 27.gsm</div>
<div class="t " style="top:32.87px;font-size:9.6px;letter-spacing:-0.28px;left:120.0px;color:#111;-webkit-text-stroke:0.2px currentColor;">by MVO</div>
<div class="t " style="top:47.87px;font-size:9.6px;letter-spacing:0px;left:4.0px;color:#111;-webkit-text-stroke:0.2px currentColor;">Högskåp Rektangulärt 2...</div>
<div class="t " style="top:47.87px;font-size:9.6px;letter-spacing:-0.28px;left:120.0px;color:#111;-webkit-text-stroke:0.2px currentColor;">by MVO</div>
<div class="t " style="top:62.87px;font-size:9.6px;letter-spacing:0px;left:4.0px;color:#111;-webkit-text-stroke:0.2px currentColor;">Garderob 02 27.gsm</div>
<div class="t " style="top:62.87px;font-size:9.6px;letter-spacing:-0.28px;left:120.0px;color:#111;-webkit-text-stroke:0.2px currentColor;">by MVO</div>
<div class="t " style="top:77.87px;font-size:9.6px;letter-spacing:0px;left:4.0px;color:#111;-webkit-text-stroke:0.2px currentColor;">Kontorsstation Singel 27...</div>
<div class="t " style="top:77.87px;font-size:9.6px;letter-spacing:-0.28px;left:120.0px;color:#111;-webkit-text-stroke:0.2px currentColor;">by MVO</div>
<div class="t " style="top:92.87px;font-size:9.6px;letter-spacing:0px;left:4.0px;color:#111;-webkit-text-stroke:0.2px currentColor;">Handfat 27.gsm</div>
<div class="t " style="top:92.87px;font-size:9.6px;letter-spacing:-0.28px;left:120.0px;color:#111;-webkit-text-stroke:0.2px currentColor;">by MVO</div>
<div class="t " style="top:107.87px;font-size:9.6px;letter-spacing:0px;left:4.0px;color:#111;-webkit-text-stroke:0.2px currentColor;">WC golv o vägg 27.gsm</div>
<div class="t " style="top:107.87px;font-size:9.6px;letter-spacing:-0.28px;left:120.0px;color:#111;-webkit-text-stroke:0.2px currentColor;">by MVO</div>
<div class="t " style="top:122.87px;font-size:9.6px;letter-spacing:0px;left:4.0px;color:#111;-webkit-text-stroke:0.2px currentColor;">Tvättmaskin 27.gsm</div>
<div class="t " style="top:122.87px;font-size:9.6px;letter-spacing:-0.28px;left:120.0px;color:#111;-webkit-text-stroke:0.2px currentColor;">by MVO</div>
</div>
<div class="sb1"></div><div class="sb2"></div>
<div class="list2">
<div class="sel2"></div>
<div class="t " style="top:-0.03px;font-size:9.6px;letter-spacing:-0.05px;left:2.5px;color:#111;-webkit-text-stroke:0.2px currentColor;">Off</div>
<div class="t " style="top:11.62px;font-size:9.6px;letter-spacing:-0.3px;left:2.5px;color:#fff;-webkit-text-stroke:0.2px currentColor;">Schematic</div>
<div class="t " style="top:23.27px;font-size:9.6px;letter-spacing:-0.05px;left:2.5px;color:#111;-webkit-text-stroke:0.2px currentColor;">Simplified</div>
<div class="t " style="top:34.92px;font-size:9.6px;letter-spacing:-0.05px;left:2.5px;color:#111;-webkit-text-stroke:0.2px currentColor;">Full</div>
<div class="t " style="top:46.57px;font-size:9.6px;letter-spacing:-0.05px;left:2.5px;color:#111;-webkit-text-stroke:0.2px currentColor;">by MVO</div>
<div class="t " style="top:58.22px;font-size:9.6px;letter-spacing:-0.05px;left:2.5px;color:#111;-webkit-text-stroke:0.2px currentColor;">Default</div>
</div>
<div class="okb"></div><div class="cnb"></div>
<div class="t " style="top:400.07px;font-size:9.6px;letter-spacing:-0.8px;right:87px;color:#111;-webkit-text-stroke:0.2px currentColor;left:534px;width:99px;text-align:center;right:auto;">OK</div>
<div class="t " style="top:429.37px;font-size:9.6px;letter-spacing:-0.36px;right:87px;color:#111;-webkit-text-stroke:0.2px currentColor;left:534px;width:99px;text-align:center;right:auto;">Cancel</div>
</body></html>
